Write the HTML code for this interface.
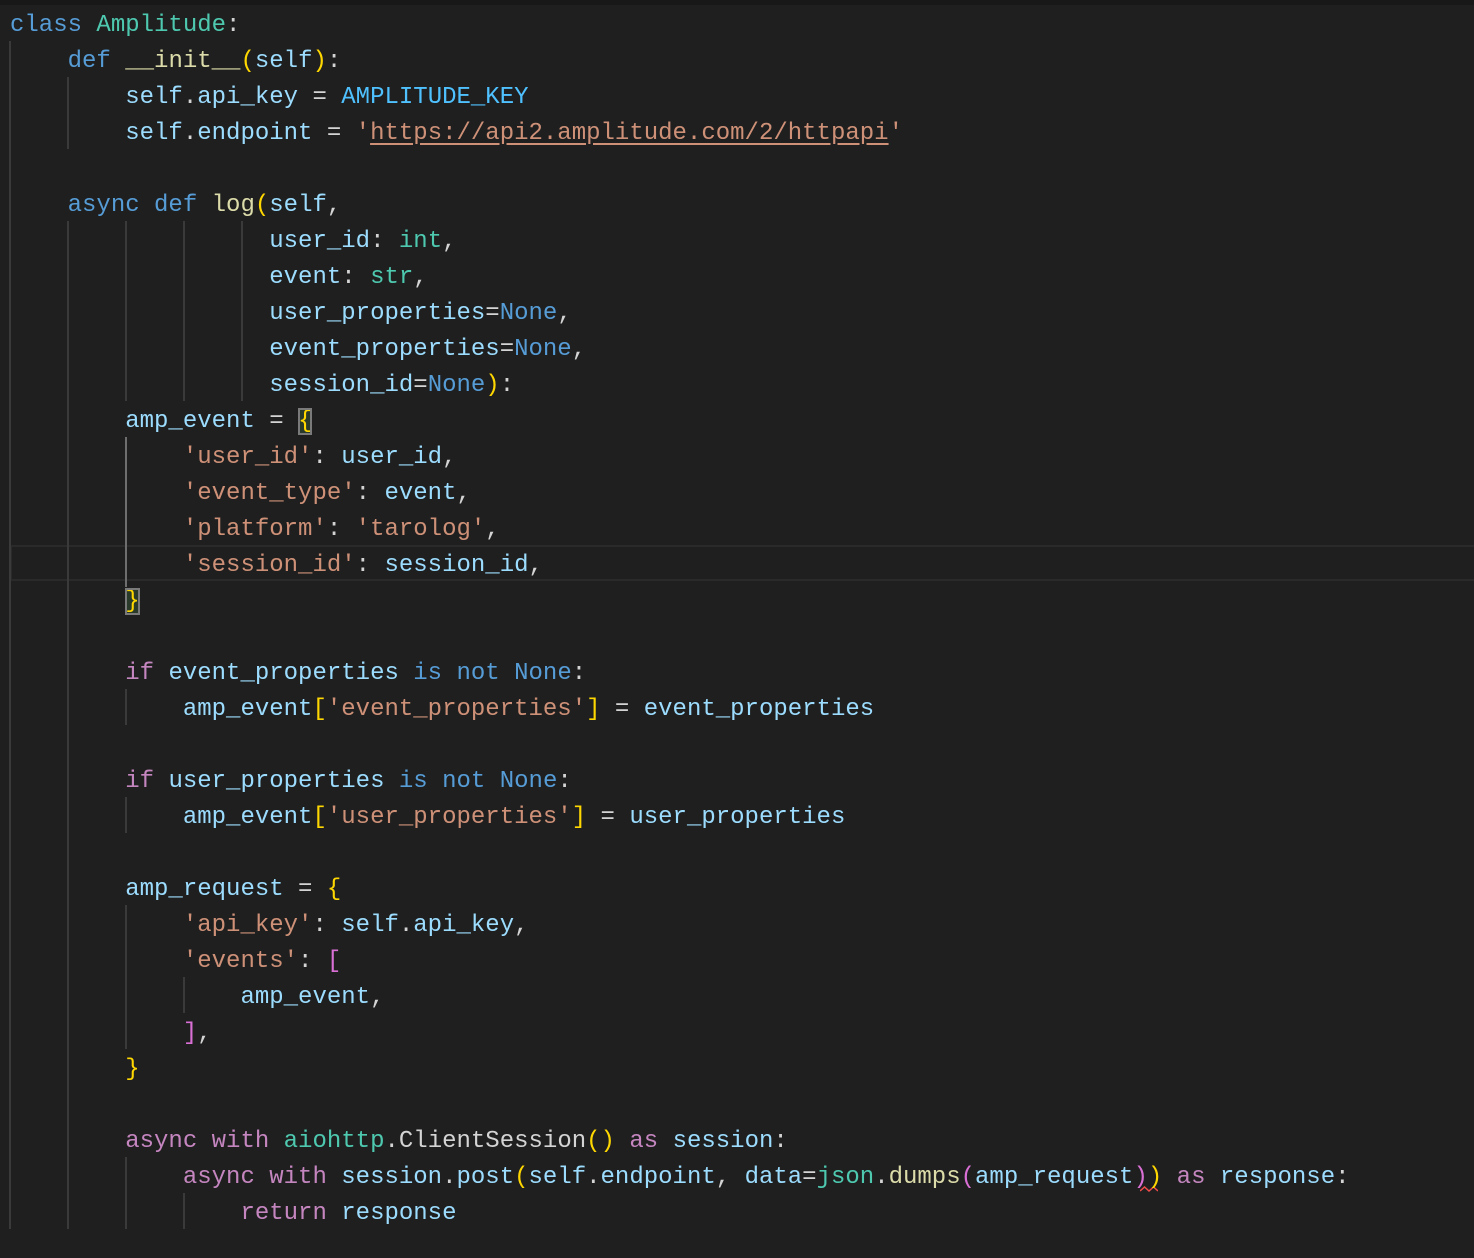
<!DOCTYPE html>
<html><head><meta charset="utf-8"><style>
html,body{margin:0;padding:0;background:#1f1f1f;width:1474px;height:1258px;overflow:hidden}
.top{position:absolute;left:0;top:0;width:1474px;height:5px;background:#181818}
pre{position:absolute;left:10px;top:8px;margin:0;font-family:"Liberation Mono",monospace;font-size:24px;line-height:36px;color:#d4d4d4;white-space:pre}
.k{color:#569cd6}.c{color:#c586c0}.t{color:#4ec9b0}.f{color:#dcdcaa}.v{color:#9cdcfe}.s{color:#ce9178}.K{color:#4fc1ff}.y{color:#ffd700}.p{color:#da70d6}.u{text-decoration:underline;text-underline-offset:4px}
.g{position:absolute;width:2px;background:#3a3a3a}
.ga{background:#6e6e6e}
.hl{position:absolute;left:10px;top:545px;width:1464px;height:32px;border:2px solid #2a2a2a;border-right:none}
.bx{outline:2px solid #7a7a7a;outline-offset:-2px;background:#2a3a2a}
.sq{position:absolute;left:1140px;top:1186px;width:18px;height:6px}
</style></head><body>
<div class="top"></div>
<div class="hl"></div>
<div class="g" style="left:9px;top:41px;height:1188px"></div>
<div class="g" style="left:67px;top:77px;height:72px"></div>
<div class="g" style="left:67px;top:221px;height:1008px"></div>
<div class="g" style="left:125px;top:221px;height:180px"></div>
<div class="g" style="left:183px;top:221px;height:180px"></div>
<div class="g" style="left:241px;top:221px;height:180px"></div>
<div class="g ga" style="left:125px;top:437px;height:150px"></div>
<div class="g" style="left:125px;top:689px;height:36px"></div>
<div class="g" style="left:125px;top:797px;height:36px"></div>
<div class="g" style="left:125px;top:905px;height:144px"></div>
<div class="g" style="left:183px;top:977px;height:36px"></div>
<div class="g" style="left:125px;top:1157px;height:72px"></div>
<div class="g" style="left:183px;top:1193px;height:36px"></div>
<svg class="sq" viewBox="0 0 18 6"><path d="M0 5 L4.5 1 L9 5 L13.5 1 L18 5" fill="none" stroke="#f14c4c" stroke-width="1.5"/></svg>
<pre><span class="k">class</span> <span class="t">Amplitude</span>:
    <span class="k">def</span> <span class="f">__init__</span><span class="y">(</span><span class="v">self</span><span class="y">)</span>:
        <span class="v">self</span>.<span class="v">api_key</span> = <span class="K">AMPLITUDE_KEY</span>
        <span class="v">self</span>.<span class="v">endpoint</span> = <span class="s">'<span class="u">https://api2.amplitude.com/2/httpapi</span>'</span>

    <span class="k">async</span> <span class="k">def</span> <span class="f">log</span><span class="y">(</span><span class="v">self</span>,
                  <span class="v">user_id</span>: <span class="t">int</span>,
                  <span class="v">event</span>: <span class="t">str</span>,
                  <span class="v">user_properties</span>=<span class="k">None</span>,
                  <span class="v">event_properties</span>=<span class="k">None</span>,
                  <span class="v">session_id</span>=<span class="k">None</span><span class="y">)</span>:
        <span class="v">amp_event</span> = <span class="y bx">{</span>
            <span class="s">'user_id'</span>: <span class="v">user_id</span>,
            <span class="s">'event_type'</span>: <span class="v">event</span>,
            <span class="s">'platform'</span>: <span class="s">'tarolog'</span>,
            <span class="s">'session_id'</span>: <span class="v">session_id</span>,
        <span class="y bx">}</span>

        <span class="c">if</span> <span class="v">event_properties</span> <span class="k">is</span> <span class="k">not</span> <span class="k">None</span>:
            <span class="v">amp_event</span><span class="y">[</span><span class="s">'event_properties'</span><span class="y">]</span> = <span class="v">event_properties</span>

        <span class="c">if</span> <span class="v">user_properties</span> <span class="k">is</span> <span class="k">not</span> <span class="k">None</span>:
            <span class="v">amp_event</span><span class="y">[</span><span class="s">'user_properties'</span><span class="y">]</span> = <span class="v">user_properties</span>

        <span class="v">amp_request</span> = <span class="y">{</span>
            <span class="s">'api_key'</span>: <span class="v">self</span>.<span class="v">api_key</span>,
            <span class="s">'events'</span>: <span class="p">[</span>
                <span class="v">amp_event</span>,
            <span class="p">]</span>,
        <span class="y">}</span>

        <span class="c">async</span> <span class="c">with</span> <span class="t">aiohttp</span>.ClientSession<span class="y">()</span> <span class="c">as</span> <span class="v">session</span>:
            <span class="c">async</span> <span class="c">with</span> <span class="v">session</span>.<span class="v">post</span><span class="y">(</span><span class="v">self</span>.<span class="v">endpoint</span>, <span class="v">data</span>=<span class="t">json</span>.<span class="f">dumps</span><span class="p">(</span><span class="v">amp_request</span><span class="p">)</span><span class="y">)</span> <span class="c">as</span> <span class="v">response</span>:
                <span class="c">return</span> <span class="v">response</span>
</pre>
</body></html>
